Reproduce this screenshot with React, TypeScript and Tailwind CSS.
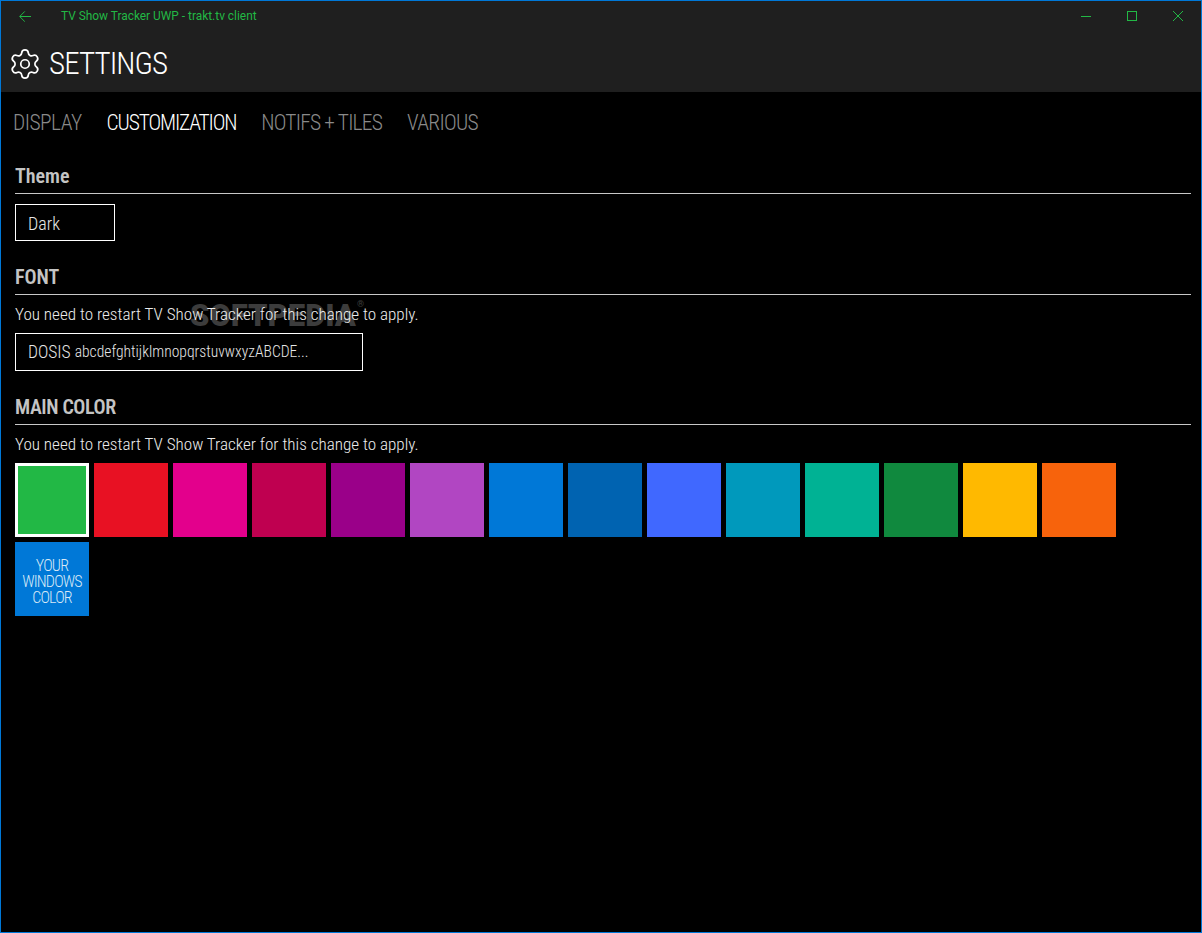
import { Settings } from 'lucide-react';

const swatches = [
  '#e81123',
  '#e3008c',
  '#bf0050',
  '#9a0089',
  '#b146c2',
  '#0078d7',
  '#0063b1',
  '#4068ff',
  '#0099bc',
  '#00b294',
  '#10893e',
  '#ffb900',
  '#f7630c',
];

const Restart = () => (
  <p className="h-[38px] pt-[9px] text-[17.1px] font-light leading-[20px] text-[#ececec]">
    You need to restart TV Show Tracker for this change to apply.
  </p>
);

const SectionTitle = ({ title, className }: { title: string; className: string }) => (
  <div className={`${className} flex items-center border-b border-[#c8c8c8] text-[20px] font-semibold text-[#c4c4c4]`}>
    {title}
  </div>
);

const App = () => {
  return (
    <div className="relative flex h-[933px] w-[1202px] flex-col overflow-hidden border border-[#0078d7] bg-black font-['Roboto',sans-serif] font-stretch-[70%]">
      {/* title bar */}
      <div className="flex h-[91px] flex-col bg-[#1f1f1f]">
        <div className="flex h-[30px] items-center text-[#22b845]">
          <svg width="12" height="11" viewBox="0 0 12 11" fill="none" stroke="currentColor" className="ml-[18px]">
            <path d="M12 5.5H0.8M5.8 0.4L0.7 5.5L5.8 10.6" />
          </svg>
          <span className="ml-[30px] pt-[1px] text-[11.9px] font-stretch-[100%]">TV Show Tracker UWP - trakt.tv client</span>
          <div className="ml-auto flex items-center gap-[36px] pr-[18px]">
            <svg width="10" height="10" viewBox="0 0 10 10" fill="none" stroke="currentColor">
              <path d="M0 5.5H10" />
            </svg>
            <svg width="10" height="10" viewBox="0 0 10 10" fill="none" stroke="currentColor">
              <rect x="0.5" y="0.5" width="9" height="9" />
            </svg>
            <svg width="10" height="10" viewBox="0 0 10 10" fill="none" stroke="currentColor">
              <path d="M0 0L10 10M10 0L0 10" />
            </svg>
          </div>
        </div>
        <div className="mt-[13px] flex items-center pl-[7px] text-white">
          <Settings size={34} strokeWidth={1.2} />
          <h1 className="ml-[7px] text-[31px] font-light leading-[40px] tracking-[-0.9px]">SETTINGS</h1>
        </div>
      </div>

      {/* tabs */}
      <div className="flex h-[60px] items-center gap-[25px] pl-[12px] pt-[2px] text-[21.5px] font-light tracking-[-0.7px] text-[#8a8a8a]">
        <span className="tracking-[-0.55px]">DISPLAY</span>
        <span className="tracking-[-1.15px] text-white">CUSTOMIZATION</span>
        <span className="tracking-[-0.8px]">NOTIFS + TILES</span>
        <span>VARIOUS</span>
      </div>

      <div className="relative z-10 flex flex-col pl-[14px] pr-[10px]">
        <SectionTitle title="Theme" className="h-[42px] pt-[6px]" />
        <div className="mt-[10px] flex h-[37px] w-[100px] items-center border border-white pl-[12px] pt-[2px] text-[18px] font-light text-[#e6e6e6]">
          Dark
        </div>

        <SectionTitle title="FONT" className="mt-[19px] h-[35px]" />
        <Restart />
        <div className="flex h-[38px] w-[348px] items-center border border-white pl-[12px] pt-[1px] font-light text-[#e6e6e6]">
          <span className="text-[17.5px]">DOSIS</span>
          <span className="ml-[4px] text-[15.6px]">abcdefghtijklmnopqrstuvwxyzABCDE...</span>
        </div>

        <SectionTitle title="MAIN COLOR" className="mt-[19px] h-[35px] tracking-[-0.4px]" />
        <Restart />
        <div className="flex w-[1120px] flex-wrap gap-[5px]">
          <div className="h-[74px] w-[74px] border-[3px] border-white bg-[#22b845]" />
          {swatches.map((color) => (
            <div key={color} className="h-[74px] w-[74px]" style={{ backgroundColor: color }} />
          ))}
          <div className="flex h-[74px] w-[74px] items-center justify-center bg-[#0078d7] pt-[6px] text-center text-[16px] font-light leading-[16px] tracking-[-0.8px] text-[#d8e8f6]">
            YOUR
            <br />
            WINDOWS
            <br />
            COLOR
          </div>
        </div>
      </div>

      {/* watermark */}
      <div className="pointer-events-none absolute left-[189px] top-[298px] text-[31px] font-black leading-[34px] font-stretch-[100%] text-[#3c3c3c]">
        SOFTPEDIA
        <span className="absolute right-[-8px] top-[0px] text-[9px] font-normal leading-[10px]">®</span>
      </div>
    </div>
  );
};

export default App;
